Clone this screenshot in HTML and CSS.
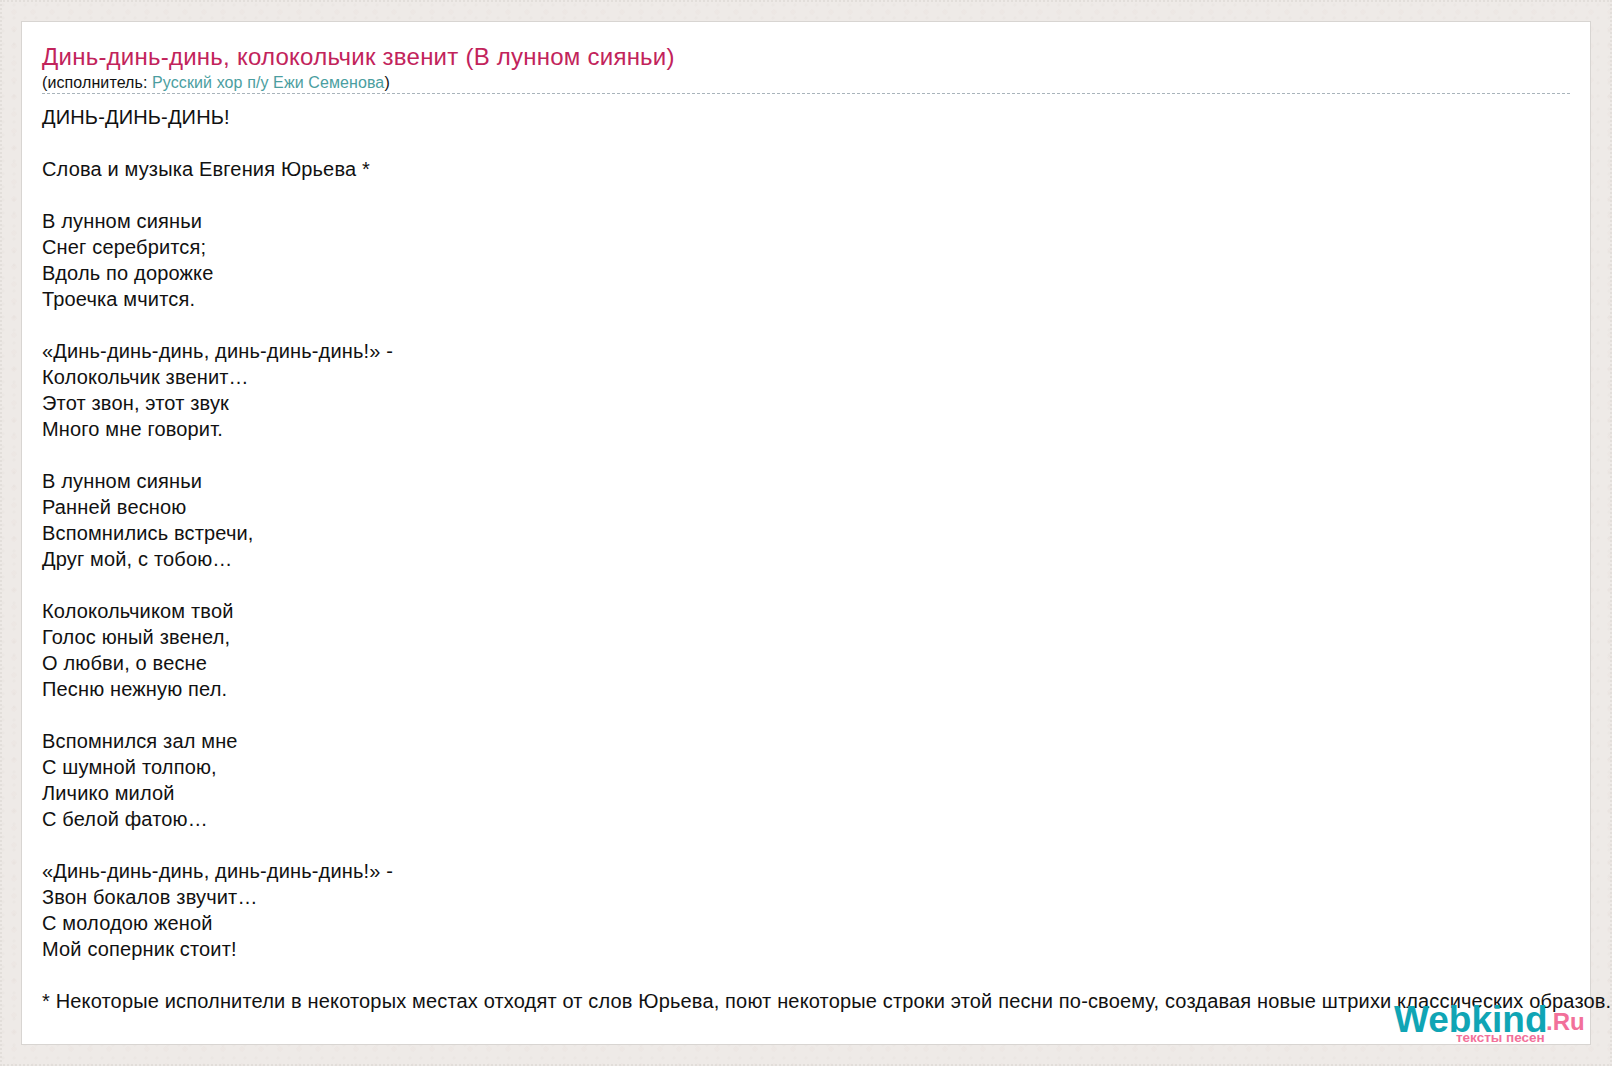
FILE: index.html
```html
<!DOCTYPE html>
<html lang="ru">
<head>
<meta charset="utf-8">
<title>Динь-динь-динь, колокольчик звенит</title>
<link rel="stylesheet" href="styles.css">
</head>
<body>
<main class="card">
<header class="head">
<h1 class="title">Динь-динь-динь, колокольчик звенит (В лунном сияньи)</h1>
<div class="artist">(исполнитель: <a class="artist-link" href="#">Русский хор п/у Ежи Семенова</a>)</div>
</header>
<div class="lyrics">ДИНЬ-ДИНЬ-ДИНЬ!

Слова и музыка Евгения Юрьева *

В лунном сияньи
Снег серебрится;
Вдоль по дорожке
Троечка мчится.

«Динь-динь-динь, динь-динь-динь!» -
Колокольчик звенит…
Этот звон, этот звук
Много мне говорит.

В лунном сияньи
Ранней весною
Вспомнились встречи,
Друг мой, с тобою…

Колокольчиком твой
Голос юный звенел,
О любви, о весне
Песню нежную пел.

Вспомнился зал мне
С шумной толпою,
Личико милой
С белой фатою…

«Динь-динь-динь, динь-динь-динь!» -
Звон бокалов звучит…
С молодою женой
Мой соперник стоит!

* Некоторые исполнители в некоторых местах отходят от слов Юрьева, поют некоторые строки этой песни по-своему, создавая новые штрихи классических образов.</div>
<div class="logo"><span class="logo-main">Webkind</span><span class="logo-ru">.Ru</span><span class="logo-sub">тексты песен</span></div>
</main>
</body>
</html>
```
FILE: styles.css
```css
html, body { margin: 0; padding: 0; height: 100%; }
body {
  background-color: #eeeae7;
  background-image:
    radial-gradient(circle at 3px 5px, rgba(120, 105, 95, 0.03) 1px, transparent 2px),
    radial-gradient(circle at 9px 2px, rgba(255, 255, 255, 0.15) 1px, transparent 2px),
    radial-gradient(circle at 14px 12px, rgba(190, 150, 140, 0.04) 2px, transparent 3px);
  background-size: 11px 13px, 7px 9px, 19px 17px;
  font-family: "Liberation Sans", Arial, sans-serif;
  overflow: hidden;
  border: 2px dotted #e2deda;
  padding: 19px;
  box-sizing: border-box;
}
.card {
  position: relative;
  box-sizing: border-box;
  height: 1024px;
  background: #fff;
  border: 1px solid #d8d5d2;
  padding: 21px 20px 0 20px;
}
.head { border-bottom: 1px dashed #a9b4bb; height: 50px; }
.title { margin: 0; font-size: 24px; line-height: 28px; font-weight: normal; color: #c2235b; letter-spacing: 0.24px; }
.artist { font-size: 16px; line-height: 23px; color: #111; letter-spacing: 0.1px; }
.artist-link { color: #4b9ea0; text-decoration: none; }
.lyrics { font-size: 20px; line-height: 26px; color: #111; white-space: pre; margin-top: 10px; letter-spacing: 0.16px; }
.logo { position: absolute; right: 6px; bottom: 0; width: 190px; height: 44px; font-weight: bold; white-space: nowrap; }
.logo-main { position: absolute; left: 0; top: 0; font-size: 37px; line-height: 40px; color: #10a5b5; }
.logo-ru { position: absolute; left: 152px; top: 7px; font-size: 24px; line-height: 30px; color: #f2709a; }
.logo-sub { position: absolute; left: 62px; top: 32px; font-size: 13.5px; line-height: 12px; color: #f2709a; }
```
